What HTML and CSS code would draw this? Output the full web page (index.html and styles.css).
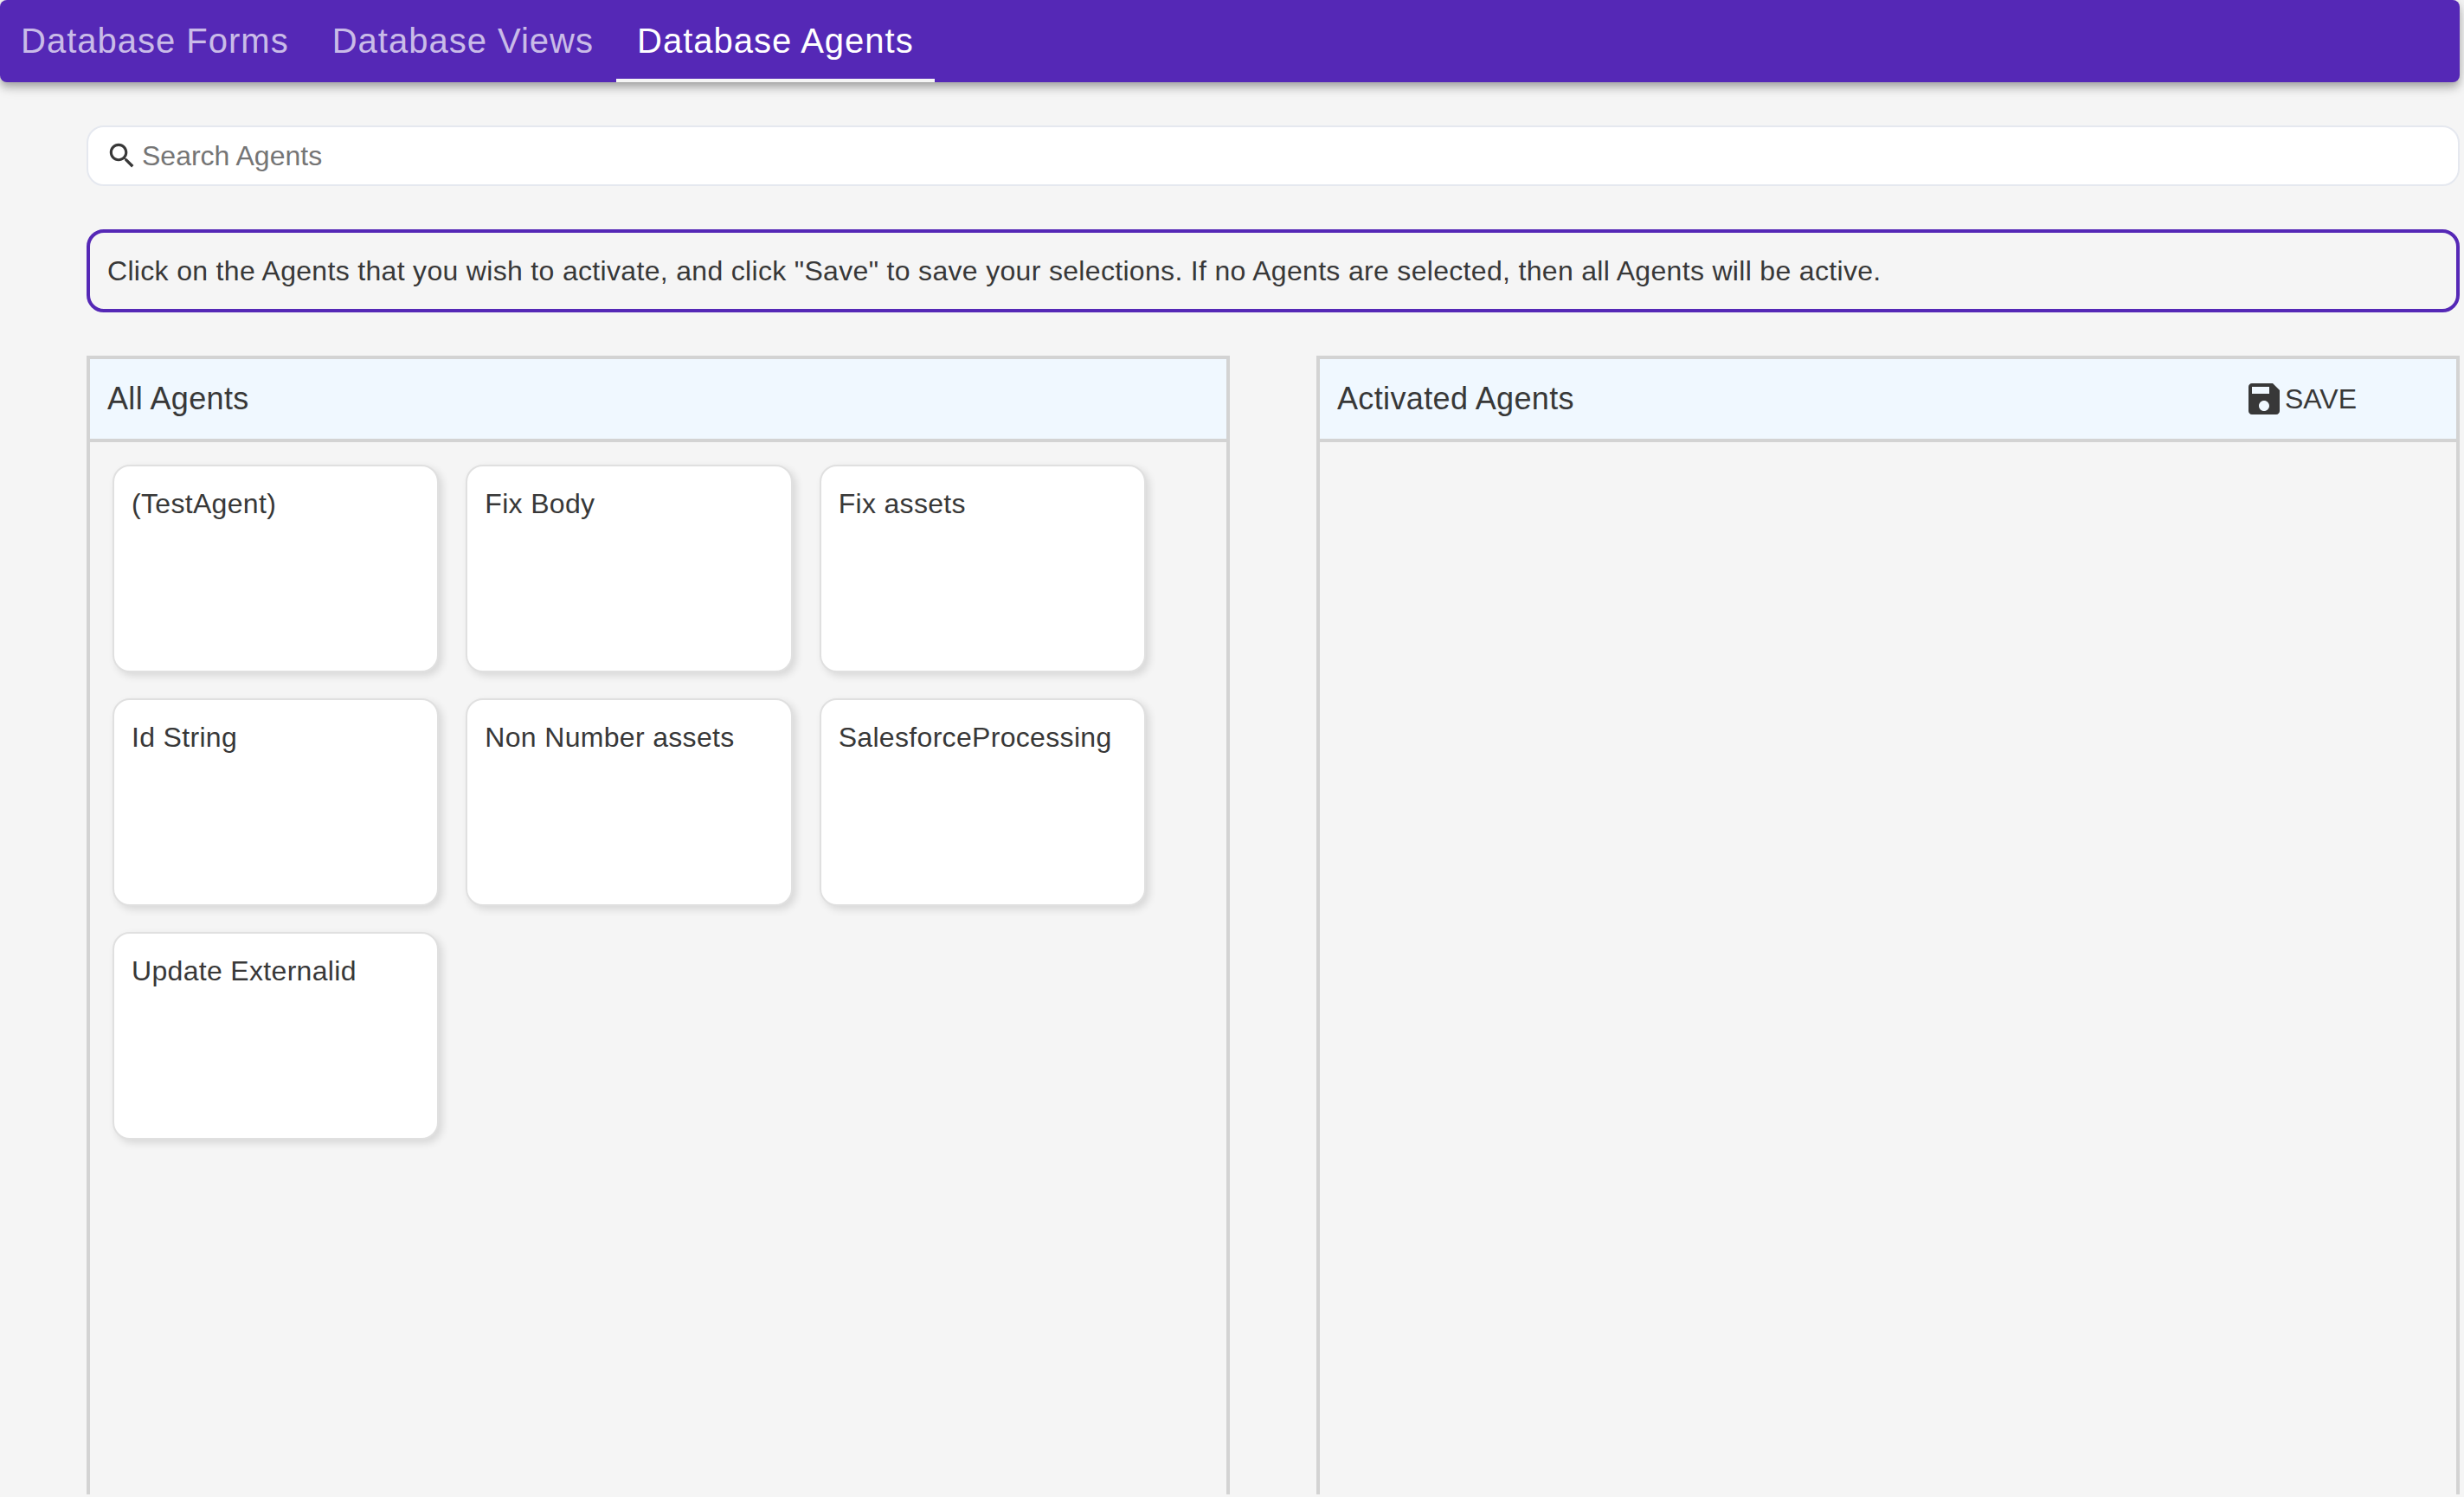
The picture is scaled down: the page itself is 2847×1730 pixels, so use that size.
FILE: index.html
```
<!DOCTYPE html>
<html lang="en">
<head>
  <meta charset="utf-8">
  <meta name="viewport" content="width=device-width, initial-scale=1">
  <title>Database Agents</title>
  <link rel="stylesheet" href="styles.css">
</head>
<body>
  <div class="page">
    <nav class="tabs" aria-label="Database sections">
      <a class="tab" href="#forms">Database Forms</a>
      <a class="tab" href="#views">Database Views</a>
      <a class="tab tab-active" href="#agents" aria-current="page">Database Agents</a>
    </nav>

    <main class="content">
      <div class="search">
        <label class="search-label" for="agent-search" aria-label="Search Agents">
          <svg class="search-icon" viewBox="0 0 24 24" aria-hidden="true"><path d="M15.5 14h-.79l-.28-.27C15.41 12.59 16 11.11 16 9.5 16 5.91 13.09 3 9.5 3S3 5.91 3 9.5 5.91 16 9.5 16c1.61 0 3.09-.59 4.23-1.57l.27.28v.79l5 4.99L20.49 19l-4.99-5zm-6 0C7.01 14 5 11.99 5 9.5S7.01 5 9.5 5 14 7.01 14 9.5 11.99 14 9.5 14z"/></svg>
        </label>
        <input class="search-input" id="agent-search" type="text" placeholder="Search Agents">
      </div>

      <p class="notice">Click on the Agents that you wish to activate, and click "Save" to save your selections. If no Agents are selected, then all Agents will be active.</p>

      <div class="panels">
        <section class="panel">
          <header class="panel-header">
            <h2 class="panel-title">All Agents</h2>
          </header>
          <ul class="cards">
            <li><button class="card" type="button">(TestAgent)</button></li>
            <li><button class="card" type="button">Fix Body</button></li>
            <li><button class="card" type="button">Fix assets</button></li>
            <li><button class="card" type="button">Id String</button></li>
            <li><button class="card" type="button">Non Number assets</button></li>
            <li><button class="card" type="button">SalesforceProcessing</button></li>
            <li><button class="card" type="button">Update Externalid</button></li>
          </ul>
        </section>

        <section class="panel">
          <header class="panel-header panel-header-actions">
            <h2 class="panel-title">Activated Agents</h2>
            <button class="save" type="button">
              <svg class="save-icon" viewBox="0 0 24 24" aria-hidden="true"><path d="M17 3H5c-1.11 0-2 .9-2 2v14c0 1.1.89 2 2 2h14c1.1 0 2-.9 2-2V7l-4-4zm-5 16c-1.66 0-3-1.34-3-3s1.34-3 3-3 3 1.34 3 3-1.34 3-3 3zm3-10H5V5h10v4z"/></svg>
              SAVE
            </button>
          </header>
        </section>
      </div>
    </main>
  </div>
</body>
</html>
```
FILE: styles.css
```
*,
*::before,
*::after {
  box-sizing: border-box;
}

body {
  margin: 0;
  background: #f5f5f5;
  color: #383838;
  font-family: "Liberation Sans", Arial, Helvetica, sans-serif;
  font-size: 32px;
  line-height: 46px;
}

button,
input {
  font: inherit;
  color: inherit;
}

.page {
  display: flex;
  flex-direction: column;
  min-height: 100vh;
  padding: 0 5px 3px 0;
}

/* Top navigation */
.tabs {
  display: flex;
  gap: 2px;
  border-radius: 8px;
  overflow: hidden;
  background: #5528b6;
  box-shadow:
    0 4px 8px -2px rgba(0, 0, 0, 0.2),
    0 8px 10px 0 rgba(0, 0, 0, 0.14),
    0 2px 20px 0 rgba(0, 0, 0, 0.12);
}

.tab {
  padding: 20px 24px;
  border: 0 solid transparent;
  border-width: 4px 0;
  color: rgba(255, 255, 255, 0.7);
  font-size: 40px;
  line-height: 47px;
  letter-spacing: 1px;
  text-decoration: none;
}

.tab-active {
  border-bottom-color: #f5f5f5;
  color: #fff;
}

.content {
  display: flex;
  flex: 1;
  flex-direction: column;
  gap: 50px;
  padding: 50px 0 0 100px;
}

/* Search */
.search {
  display: flex;
  align-items: center;
  gap: 4px;
  padding: 10px 20px;
  border: 2px solid #e5e8ef;
  border-radius: 20px;
  background: #fff;
}

.search-label {
  display: flex;
}

.search-icon {
  width: 38px;
  height: 38px;
  fill: currentColor;
}

.search-input {
  flex: 1;
  min-width: 0;
  height: 46px;
  padding: 0;
  border: 0;
  outline: 0;
  background: transparent;
}

.search-input::placeholder {
  color: #757575;
  opacity: 1;
}

.notice {
  margin: 0;
  padding: 21px 20px;
  border: 4px solid #5528b6;
  border-radius: 20px;
  letter-spacing: 0.01em;
}

/* Agent panels */
.panels {
  display: grid;
  flex: 1;
  grid-template-columns: 1fr 1fr;
  gap: 100px;
}

.panel {
  border: 4px solid #d3d3d3;
  border-bottom: 0;
}

.panel-header {
  display: flex;
  align-items: center;
  justify-content: space-between;
  padding: 22px 20px;
  border-bottom: 4px solid #d3d3d3;
  background: #f0f8ff;
}

.panel-header-actions {
  padding-right: 115px;
}

.panel-title {
  margin: 0;
  font-size: 36px;
  font-weight: 400;
  line-height: 48px;
  letter-spacing: 0.01em;
}

.save {
  display: flex;
  align-items: center;
  padding: 0;
  border: 0;
  background: none;
  line-height: 48px;
  cursor: pointer;
}

.save-icon {
  width: 48px;
  height: 48px;
  fill: currentColor;
}

.cards {
  display: grid;
  grid-template-columns: repeat(3, 1fr);
  gap: 30px 31px;
  margin: 0;
  padding: 26px 93px 26px 26px;
  list-style: none;
}

.card {
  display: flex;
  align-items: flex-start;
  width: 100%;
  height: 240px;
  padding: 20px;
  border: 2px solid #e0e0e0;
  border-radius: 20px;
  background: #fff;
  box-shadow: 4px 4px 10px rgba(0, 0, 0, 0.12);
  letter-spacing: 0.01em;
  text-align: left;
  cursor: pointer;
}
```
